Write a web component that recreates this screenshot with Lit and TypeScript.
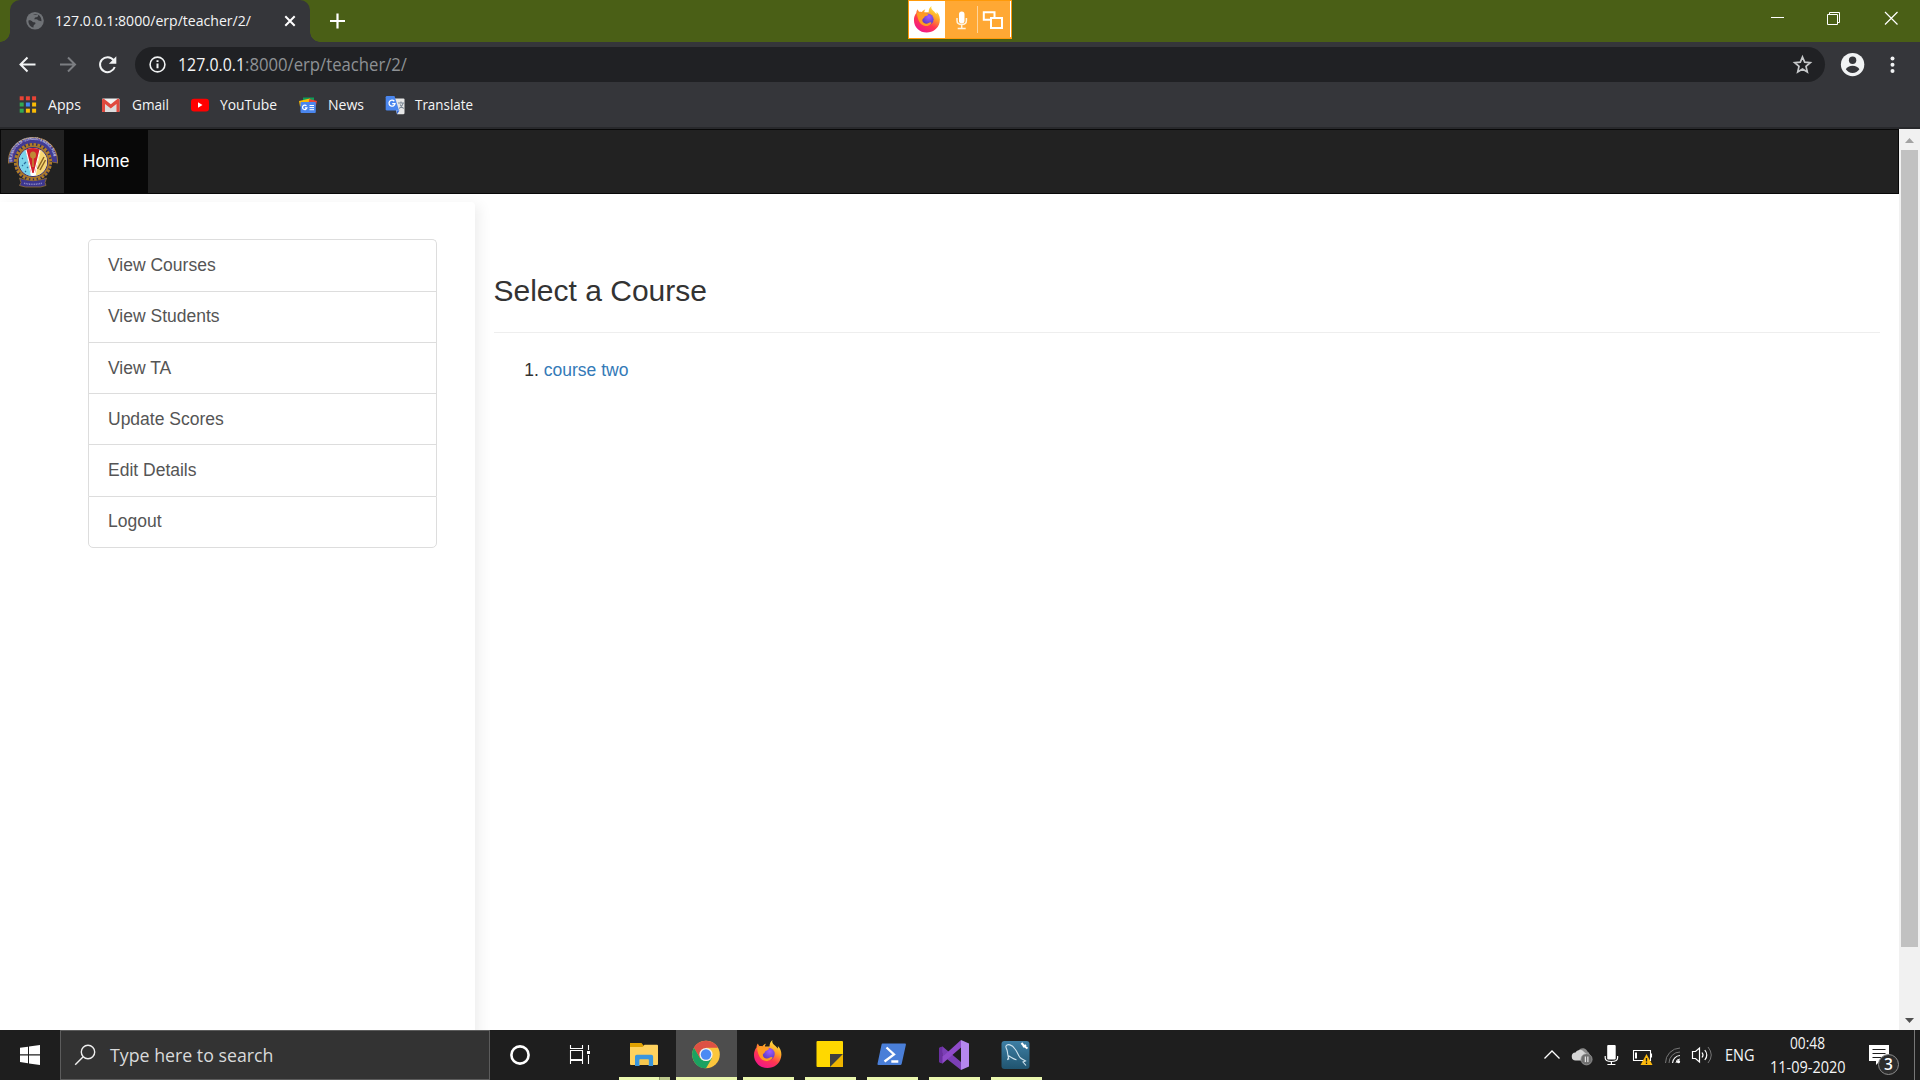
import { LitElement, html, svg, css, type TemplateResult } from "lit";
import { customElement } from "lit/decorators.js";

/* Single-line label in the system UI face, fitted to an exact width. */
const label = (text: string, width: number, size: number, cls = "") => html`
  <svg class="label ${cls}" width=${width} height=${Math.round(size * 1.4)}>
    <text x="0" y=${Math.round(size * 1.05)} font-size=${size} textLength=${width} lengthAdjust="spacingAndGlyphs">${text}</text>
  </svg>`;

/* Icon whose drawing coordinates start at (x, y). */
const icon = (x: number, y: number, w: number, h: number, body: TemplateResult | unknown) => html`
  <svg class="icon" width=${w} height=${h} viewBox="${x} ${y} ${w} ${h}">${body}</svg>`;

const firefox = (id: string) => svg`
  <defs>
    <linearGradient id="${id}a" x1=".85" y1="0" x2=".3" y2="1">
      <stop offset="0" stop-color="#fff44f"/><stop offset=".35" stop-color="#ffa726"/>
      <stop offset=".65" stop-color="#ff3750"/><stop offset="1" stop-color="#f0148c"/>
    </linearGradient>
    <radialGradient id="${id}b" cx=".6" cy=".3" r=".8">
      <stop offset="0" stop-color="#a05bff"/><stop offset="1" stop-color="#4b34b5"/>
    </radialGradient>
  </defs>
  <path fill="url(#${id}a)" d="M19 0c-1 3 1 4 3 6 1 1 1.500 1.500 2 2.500.5-.5.500-1.500.3-2.500C27.500 9 28.500 13 27.500 17.500 26 24 20.500 28 14 28 6.500 28 .5 22.500.5 15c0-3 .8-5.500 2.500-7.500 0-1.500.5-3 1.500-4 .2 1 .8 2 1.500 2.500 1 0 2 0 3 .3C9.500 5 11 4 12.500 3.700c-.8 1-1.200 2-1 2.800H16C16 3.500 17 1.500 19 0z"/>
  <circle cx="15" cy="14" r="6.200" fill="url(#${id}b)"/>
  <path fill="#ff9b22" d="M3.500 7.500C6 6 9 6.200 11 7.600l4.500.7c.3 1-1.500 2-3.500 2.600-.5 1.800-2.700 2.600-2.700 4.200 0 2 2 3.700 4.300 3.500 2-.2 3-1.600 4.600-1.500 1 .1.900.9.3 1.500-1.500 1.700-3.700 2.800-6 2.500-5-.7-8-5-9-13.600z"/>`;

const bookmarks: { text: string; width: number; gap: number; after: number; icon: unknown }[] = [
  {
    text: "Apps", width: 33, gap: 12, after: 20,
    icon: icon(19, 96, 17, 17, svg`
      ${["#ea4335", "#ea4335", "#ea4335", "#34a853", "#4285f4", "#fbbc05", "#34a853", "#fbbc05", "#fbbc05"].map(
        (c, i) => svg`<rect x=${19.7 + (i % 3) * 6.2} y=${96.3 + Math.floor(i / 3) * 6.2} width="4" height="4" fill=${c}/>`)}`),
  },
  {
    text: "Gmail", width: 37, gap: 11.5, after: 22.5,
    icon: icon(101, 96, 19, 17, svg`
      <rect x="102" y="98.500" width="17.500" height="13.500" rx="1" fill="#f2f2f2"/>
      <path d="M105 112v-8l6 4.500 6-4.500v8z" fill="#dcdcdc"/>
      <path d="M102 100v11.200q0 .8.800.8H105v-8l5.800 4.400 5.700-4.400v8h2.200q.8 0 .8-.8V100q0-1.500-1.500-1.500l-7.200 5.700-7.300-5.700q-1.500 0-1.500 1.500z" fill="#e04a3f"/>`),
  },
  {
    text: "YouTube", width: 57, gap: 11, after: 22,
    icon: icon(191, 96, 18, 17, svg`
      <rect x="191" y="98.700" width="18" height="12.800" rx="3" fill="#f00"/>
      <path d="M198 102.300v5.400l4.500-2.700z" fill="#fff"/>`),
  },
  {
    text: "News", width: 36, gap: 11, after: 21,
    icon: icon(299, 96, 18, 18, svg`
      <path d="M303 97.500h11v6h-11z" fill="#0f9d58"/>
      <path d="M299 101l11-2.500 1 5-11 3z" fill="#fbbc04"/>
      <path d="M309 99l8 2-1.500 6-7-1z" fill="#ea4335"/>
      <rect x="300.500" y="102" width="15.300" height="11" rx="1" fill="#4a86ee"/>
      <path d="M306.500 106a2.200 2.200 0 1 0 .4 1.900h-2" fill="none" stroke="#fff" stroke-width="1.200"/>
      <path d="M309.500 105.500h4.500m-4.500 2.100h4.500m-4.500 2.100h4.500" stroke="#fff"/>`),
  },
  {
    text: "Translate", width: 58, gap: 10, after: 0,
    icon: icon(385, 96, 20, 20, svg`
      <path d="M393 98.500h10.500q1 0 1 1V113q0 1.300-1.300 1.300H397z" fill="#e6e6e6"/>
      <path d="M398 103h6m-3-1.500v1.500m2.200 0q-.7 3.500-4 5.500m1-4q1 2.700 3.500 4" fill="none" stroke="#7b8794" stroke-width="1.100"/>
      <path d="M396.500 110.500h3l-2.500 3.800z" fill="#3367d6"/>
      <path d="M387 96h7.500l4.500 14.500h-12q-1.300 0-1.300-1.300V97.300q0-1.300 1.300-1.300z" fill="#4a86ee"/>
      <path d="M394.300 101.200a3 3 0 1 0 .7 2.500h-2.800" fill="none" stroke="#fff" stroke-width="1.300"/>`),
  },
];

const emblem = icon(8, 137, 50, 50, svg`
  <defs>
    <path id="arc" d="M12.200 161.500A20.900 19.700 0 1 1 53.800 161.500"/>
    <clipPath id="disc"><circle cx="33" cy="162" r="14"/></clipPath>
  </defs>
  <path d="M8 163.500v-3a25 23.500 0 0 1 50 0v3l-5.500-1-4-9h-31l-4 9z" fill="#94703a"/>
  <path d="M9 162.500v-2a24 22.500 0 0 1 48 0v2l-4.600-.8-3-8H17l-3 8z" fill="#413a92"/>
  <circle cx="33" cy="162" r="18.700" fill="#2f2b5c"/>
  <circle cx="33" cy="162" r="17.600" fill="none" stroke="#b07d28" stroke-width="3" stroke-dasharray="2.600 1.350"/>
  <circle cx="33" cy="162" r="16.600" fill="#a8772a"/>
  <circle cx="33" cy="162" r="14.900" fill="#35307c"/>
  <g clip-path="url(#disc)">
    <path d="M19 148h28v28H19z" fill="#fff"/>
    <path d="M19 148h6.500l5.500 29H19z" fill="#7ad4ea"/>
    <path d="M40.500 148H48v29H35.500z" fill="#f7d774"/>
    <path d="M25 147h16l-6 26h-4z" fill="#d3202b"/>
    <path d="M26 150l6.500 26h1L40 150" fill="none" stroke="#fff" stroke-width="1.100"/>
    <path d="M22 158l1 1m2 3l1 1m-4 2l1 1m4 1l1 1m-3 3l1 1m-4-14l1 1m1 4l1 1" stroke="#276a9b" stroke-width="1.200"/>
    <path d="M37.500 169l6.500-12m-4 13l5.500-10" stroke="#8a6424" stroke-width="1.500"/>
    <path d="M40 152l-3 13" stroke="#fff3bc"/>
  </g>
  <ellipse cx="33" cy="155" rx="3" ry="3.600" fill="#c08a35"/>
  <path d="M33 158v9" stroke="#c08a35" stroke-width="1.600"/>
  <path d="M19.500 178l4 1.500q9.500 2.500 19 0l4-1.500-1.500 4.500 1 3-5.500 1.500H25.500L19.500 185.500l1.500-3z" fill="#3b358f" stroke="#94703a" stroke-width=".8"/>
  <text font-size="4.200" font-weight="700" fill="#dedcf0" font-family="Liberation Sans, sans-serif"><textPath href="#arc" textLength="62" lengthAdjust="spacingAndGlyphs">BIRLA INSTITUTE OF TECHNOLOGY &amp; SCIENCE, PILANI</textPath></text>
  <path d="M24 183.200q9 2.200 18 0" fill="none" stroke="#8d88c4" stroke-width="1.600" stroke-dasharray="1 .7"/>`);

const pinned: { name: string; art: unknown }[] = [
  {
    name: "files",
    art: icon(630, 1040, 28, 28, svg`
      <path d="M630 1043h11.500l2 2.500v4H630z" fill="#e0a100"/>
      <path d="M630 1047h12.500l2-2.200H657q1 0 1 1V1064q0 1-1 1h-26q-1 0-1-1z" fill="#ffd25e"/>
      <path d="M635 1066v-9.500q0-1.800 1.800-1.800h14.500q1.800 0 1.800 1.800v9.500h-4.500v-6.500h-9v6.500z" fill="#3a96dd"/>
      <path d="M639.600 1059.500h9v5.500h-9z" fill="#f5c64e"/>`),
  },
  {
    name: "chrome",
    art: icon(693, 1040.5, 28, 28, svg`
      <circle cx="706" cy="1055" r="13.800" fill="#fbc63c"/>
      <path d="M694 1048.100A13.800 13.800 0 0 1 718 1048.300H706l-6 10.200z" fill="#dd5144"/>
      <path d="M694 1048.100A13.800 13.800 0 0 0 706 1068.800l6-10.300-6 3-6-3z" fill="#1ba261"/>
      <path d="M694 1048.100l6 10.400 6-10.200h12" fill="#dd5144"/>
      <circle cx="706" cy="1055" r="6.600" fill="#f1f1f1"/>
      <circle cx="706" cy="1055" r="5.200" fill="#4a8af4"/>`),
  },
  { name: "firefox", art: icon(0.5, 0, 28, 28, firefox("t")) },
  {
    name: "notes",
    art: icon(816, 1041, 28, 28, svg`
      <rect x="816.500" y="1042" width="26.500" height="26" rx="1" fill="#ffd800"/>
      <path d="M830 1068l13-13v12q0 1-1 1z" fill="#eeb400"/>
      <path d="M830 1055h13l-13 13z" fill="#3f3f3f"/>`),
  },
  {
    name: "powershell",
    art: icon(878, 1040.5, 28, 28, svg`
      <path d="M882.500 1044H905q1.200 0 .9 1.200l-4.200 19q-.3 1.200-1.500 1.200H878.500q-1.300 0-1-1.200l4-19q.2-1.200 1-1.200z" fill="#4a7fd8"/>
      <path d="M886.500 1048l7.500 6.800-9.500 7.200m6.800 0h7" fill="none" stroke="#fff" stroke-width="2.300"/>`),
  },
  {
    name: "studio",
    art: icon(939, 1040, 30, 30, svg`
      <path d="M939 1048l3.500-1.500L961 1062v8l-18.500-14.500v-3L939 1056z" fill="#7b3fb5"/>
      <path d="M939 1048v14l3.500 1.500 18.500-16V1040l-16.500 15-2 1.200v-7z" fill="#8f4bc9"/>
      <path d="M939 1048l3.500-1.500v17L939 1062z" fill="#6a2fa0"/>
      <path d="M961 1040l8 3.500v23l-8 3.500z" fill="#b587ee"/>`),
  },
  {
    name: "workbench",
    art: icon(1002, 1040, 29, 29, svg`
      <defs><linearGradient id="wb" x2="0" y2="1"><stop stop-color="#3e7fa5"/><stop offset="1" stop-color="#20546f"/></linearGradient></defs>
      <rect x="1001.500" y="1041" width="28" height="28" rx="3" fill="url(#wb)"/>
      <path d="M1006 1046c1.500-2.500 6-1.500 9 3 2.500 3 3 6 5 8.500 2 2 4 2.500 5.500 3.500l-2.500 1 3 3.500m-18.500-5.500l1.500-4c3 2 5.500 3.500 7.500 3.800M1007 1050c1 3.500.5 6 2 9.500M1006 1046c-.5 1.500.5 2.500 1 4" fill="none" stroke="#cfe3ee" stroke-width="1.100"/>
      <path d="M1021.500 1043l2.500 3m0 0l3.500 2.500m-4.500-1.500l3-2" stroke="#fff" stroke-width="2"/>`),
  },
];

@customElement("app-root")
export class AppRoot extends LitElement {
  static styles = css`
    :host { display: flex; flex-direction: column; width: 1920px; height: 1080px; overflow: hidden; position: relative;
      background: #fff; font-family: "Liberation Sans", Arial, sans-serif; }
    * { box-sizing: border-box; }
    svg { display: block; flex: none; overflow: visible; }
    .label { font-family: "Open Sans", "Noto Sans", sans-serif; fill: #f4f5f6; }
    .label.dim { fill: #8e9195; }
    .label.pale { fill: #d9dadb; }

    .strip { display: flex; height: 42px; padding-left: 10px; background: #4a5f16; flex: none; }
    .tab { position: relative; display: flex; align-items: flex-start; width: 300px; height: 42px; background: #35363a;
      border-radius: 10px 10px 0 0; padding: 11px 0 0 16px; }
    .tab::before, .tab::after { content: ""; position: absolute; bottom: 0; width: 10px; height: 10px; }
    .tab::before { left: -10px; background: radial-gradient(circle at 0 0, transparent 9.500px, #35363a 10px); }
    .tab::after { right: -10px; background: radial-gradient(circle at 100% 0, transparent 9.500px, #35363a 10px); }
    .tab .label { margin: -1px 33px 0 11px; }
    .plus { margin: 11px 0 0 19px; }
    .controls { display: flex; margin-left: auto; }
    .float { position: absolute; left: 908px; top: 0; width: 104px; height: 39px; background: #ffa834;
      border: 1px solid #ff9a0a; display: flex; }
    .float .fx { background: #fff; width: 36px; height: 37px; padding: 5px 0 0 4px; }

    .tools { display: flex; height: 43px; background: #35363a; flex: none; align-items: flex-start; }
    .omni { display: flex; align-items: flex-start; width: 1690px; height: 35px; margin-top: 5px; border-radius: 18px; background: #202124; }
    .omni .label { margin-top: 6px; }
    .omni .host { margin-left: 12px; }
    .omni .star { margin-left: auto; }
    .marks { display: flex; height: 42px; background: #35363a; flex: none; padding: 11px 0 0 19px; align-items: flex-start; }
    .mark { display: flex; }
    .mark .label { margin-top: -2px; }
    .edge { height: 2px; background: #28292c; flex: none; }

    .view { display: flex; height: 901px; flex: none; }
    .page { width: 1899px; display: flex; flex-direction: column; overflow: hidden; }
    .nav { display: flex; height: 65px; flex: none; background: #222; border: 1px solid #080808; }
    .brand { width: 63px; padding: 7px 0 0 7px; }
    .home { width: 84px; background: #080808; color: #fff; font-size: 17.5px; line-height: 25px; padding: 19px 0 0 18.75px; }
    .body { display: flex; flex: 1; padding-top: 8px; }
    .side { width: 475px; height: 900px; flex: none; padding: 37.4px 0 0 88px; border-radius: 0 4px 0 0;
      box-shadow: 4px 3px 14px rgba(0, 0, 0, .075); }
    .menu { width: 349px; display: flex; flex-direction: column; }
    .row { height: 51.25px; flex: none; border: 1px solid #ddd; border-bottom: 0; padding: 12.65px 19px 0; font-size: 17.5px;
      line-height: 25px; color: #555; }
    .row:first-child { border-radius: 5px 5px 0 0; }
    .row:last-child { border-bottom: 1px solid #ddd; border-radius: 0 0 5px 5px; height: 52.25px; }
    .main { flex: 1; padding: 72px 19px 0 19px; color: #333; }
    .title { margin: 0 0 0 -.5px; font-weight: 400; font-size: 30px; line-height: 33px; }
    .rule { height: 1px; background: #eee; margin: 25px 0 25px; }
    .courses { margin: 0; padding-left: 49.75px; font-size: 17.5px; line-height: 25px; }
    .link { color: #337ab7; }

    .scroll { width: 21px; height: 901px; background: #f1f1f1; display: flex; flex-direction: column; align-items: center; }
    .thumb { width: 17px; height: 797px; background: #c1c1c1; }
    .down { margin-top: auto; }

    .bar { display: flex; height: 50px; flex: none; background: #1e1e1e; }
    .search { display: flex; width: 430px; height: 50px; background: #333; border: 1px solid #5c5c5c; }
    .search .label { margin: 12px 0 0 0; }
    .apps { display: flex; margin-left: 3px; }
    .app { width: 62px; height: 50px; display: flex; flex-direction: column; align-items: center; justify-content: space-between;
      padding-top: 10px; }
    .app::after { content: ""; width: 51px; height: 3px; background: #eaf7ae; margin-left: 1px; }
    .app.files::after { background: linear-gradient(90deg, #eaf7ae 40px, #8e9a68 40px, #8e9a68 41px, #bcc88c 41px); }
    .app.chrome { background: #4d4d4d; width: 61px; margin-left: 1px; }
    .app.chrome::after { width: 61px; margin: 0; }
    .tray { display: flex; margin-left: auto; }
    .lang { width: 44px; padding: 15px 0 0 7px; }
    .clock { width: 93px; display: flex; flex-direction: column; align-items: center; padding: 3px 1.500px 0 0; gap: 2px; }
    .peek { width: 6px; border-left: 1px solid #777; }
  `;

  render() {
    return html`
      <div class="strip">
        <div class="tab">
          ${icon(26, 11, 18, 19, svg`
            <circle cx="35" cy="20.800" r="8.800" fill="#6f7276"/>
            <path d="M28.500 20.500c1.500-.5 3 .2 4 1.200 1 .8 3 .3 3 1.500 0 1.500-2 1.200-2 2.800v1.500c-3-.5-5.500-3.500-5-7zM33 15c1-1 4-1.200 5.500-.2l-1 2.200-2.500.5-.8 1.800c1.800.2 3.300-.3 4.300 1.200l3 .8c0-3-1-5-3-6.500" fill="#35363a"/>`)}
          ${label("127.0.0.1:8000/erp/teacher/2/", 196, 15)}
          ${icon(284, 11, 12, 19, svg`<path d="M285.300 16.300l9.400 9.400m0-9.400l-9.400 9.400" stroke="#fff" stroke-width="2"/>`)}
        </div>
        <div class="plus">${icon(329, 11, 18, 19, svg`<path d="M330 21h15m-7.500-7.500v15" stroke="#fff" stroke-width="2.200"/>`)}</div>
        <div class="controls">
          ${icon(1749, 0, 57, 42, svg`<path d="M1771 17.500h13" stroke="#fff"/>`)}
          ${icon(1806, 0, 57, 42, svg`<path d="M1827.500 14.500h10v10h-10zM1829.500 14.500v-2h10v10h-2" fill="none" stroke="#fff"/>`)}
          ${icon(1863, 0, 57, 42, svg`<path d="M1885 12l12.500 12.500m0-12.500l-12.500 12.500" stroke="#fff" stroke-width="1.200"/>`)}
        </div>
      </div>
      <div class="float">
        <div class="fx">${html`<svg class="icon" width="28" height="28" viewBox="-.5 0 29.500 29.500">${firefox("p")}</svg>`}</div>
        ${icon(945, 1, 66, 37, svg`
          <rect x="959" y="11.500" width="5.500" height="12" rx="2.700" fill="#fff"/>
          <path d="M957 18v2.500q0 4 4.700 4t4.700-4V18M961.700 24.500v4m-4 0h8" fill="none" stroke="#fff3df" stroke-width="1.500"/>
          <path d="M977.500 6v27" stroke="#ffd49a"/>
          <path d="M990 19.800h-6.200v-7.600h10.700V17M991 18h11v10h-11z" fill="none" stroke="#fff" stroke-width="2"/>
          <path d="M1010.500 1v36" stroke="#fff"/>`)}
      </div>
      <div class="tools">
        ${icon(0, 42, 135, 43, svg`
          <path d="M35.500 64.500H20.500m7-7l-7 7 7 7" fill="none" stroke="#f1f3f4" stroke-width="2"/>
          <path d="M60 64.500H75m-7-7l7 7-7 7" fill="none" stroke="#7c7e82" stroke-width="2"/>
          <path d="M113.600 60.200A7.500 7.500 0 1 0 114.700 67" fill="none" stroke="#f1f3f4" stroke-width="2"/>
          <path d="M116.300 56.300v7.400h-7.400z" fill="#f1f3f4"/>`)}
        <div class="omni">
          ${icon(135, 47, 31, 35, svg`
            <circle cx="157.500" cy="64.500" r="7.400" fill="none" stroke="#f1f3f4" stroke-width="1.600"/>
            <path d="M157.500 63.500v4.700m0-8v1.900" stroke="#f1f3f4" stroke-width="2"/>`)}
          <div class="host">${label("127.0.0.1", 67, 17.4)}</div>
          ${label(":8000/erp/teacher/2/", 162, 17.4, "dim")}
          <div class="star">${icon(1785, 47, 40, 35, svg`
            <path d="M1802.500 57l2.200 5.200 5.600.5-4.300 3.700 1.300 5.500-4.800-2.900-4.800 2.900 1.300-5.500-4.300-3.700 5.600-.5z" fill="none" stroke="#c6c8ca" stroke-width="1.700"/>`)}</div>
        </div>
        ${icon(1825, 42, 95, 43, svg`
          <circle cx="1852.600" cy="64.600" r="11.700" fill="#f1f3f4"/>
          <circle cx="1852.600" cy="60.200" r="3.700" fill="#35363a"/>
          <path d="M1845.800 69.300q2-3.500 6.800-3.500t6.800 3.500q-2.500 3.600-6.800 3.600t-6.800-3.600z" fill="#35363a"/>
          <circle cx="1892.500" cy="58.500" r="2" fill="#f1f3f4"/><circle cx="1892.500" cy="64.800" r="2" fill="#f1f3f4"/><circle cx="1892.500" cy="71" r="2" fill="#f1f3f4"/>`)}
      </div>
      <div class="marks">
        ${bookmarks.map((b) => html`<div class="mark" style="gap:${b.gap}px;margin-right:${b.after}px">${b.icon}${label(b.text, b.width, 15)}</div>`)}
      </div>
      <div class="edge"></div>
      <div class="view">
        <div class="page">
          <div class="nav">
            <div class="brand">${emblem}</div>
            <div class="home">Home</div>
          </div>
          <div class="body">
            <div class="side">
              <div class="menu">
                ${["View Courses", "View Students", "View TA", "Update Scores", "Edit Details", "Logout"].map((t) => html`<div class="row">${t}</div>`)}
              </div>
            </div>
            <div class="main">
              <h3 class="title">Select a Course</h3>
              <div class="rule"></div>
              <ol class="courses"><li><a class="link">course two</a></li></ol>
            </div>
          </div>
        </div>
        <div class="scroll">
          ${icon(1899, 129, 21, 21, svg`<path d="M1905 143l4.500-5 4.500 5z" fill="#a3a3a3"/>`)}
          <div class="thumb"></div>
          <div class="down">${icon(1899, 1009, 21, 21, svg`<path d="M1905 1018l4.500 5 4.500-5z" fill="#505050"/>`)}</div>
        </div>
      </div>
      <div class="bar">
        ${icon(0, 1030, 60, 50, svg`<path d="M20 1047.800l8-1.100v7.500h-8zM29 1046.500l11-1.600v9.300H29zM20 1055.400h8v7.800l-8-1.100zM29 1055.400h11v9.700l-11-1.600z" fill="#fff"/>`)}
        <div class="search">
          ${icon(61, 1031, 49, 48, svg`
            <circle cx="88" cy="1052" r="6.700" fill="none" stroke="#f0f0f0" stroke-width="1.400"/>
            <path d="M83.200 1056.800l-8 8" stroke="#f0f0f0" stroke-width="1.400"/>`)}
          ${label("Type here to search", 163.5, 18.5, "pale")}
        </div>
        ${icon(490, 1030, 60, 50, svg`<circle cx="520" cy="1055" r="8.600" fill="none" stroke="#fff" stroke-width="2.600"/>`)}
        ${icon(550, 1030, 60, 50, svg`
          <path d="M570.500 1045v3.500h12v-3.500M570.500 1050.500h12v9h-12zM570.500 1064v-3.500h12v3.500M588.500 1045v5m0 5v9" fill="none" stroke="#fff" stroke-width="1.100"/>
          <rect x="587" y="1051" width="3" height="3" fill="#fff"/>`)}
        <div class="apps">${pinned.map((p) => html`<div class="app ${p.name}">${p.art}</div>`)}</div>
        <div class="tray">
          ${icon(1536, 1030, 32, 50, svg`<path d="M1544.500 1058.500l7.500-7.500 7.500 7.500" fill="none" stroke="#fff" stroke-width="1.300"/>`)}
          ${icon(1568, 1030, 30, 50, svg`
            <path d="M1579 1050a5 5 0 0 1 8.500 1.500q3 1.500 1.500 5.500l-6 1z" fill="#8a8a8a"/>
            <path d="M1576 1060.500a4 4 0 0 1-.5-8 5 5 0 0 1 8.500-.5q2.500 1 4 3.500l-2 5z" fill="#d6d6d6"/>
            <circle cx="1586.500" cy="1059.300" r="5.600" fill="#6e6e6e" stroke="#a5a5a5" stroke-width=".7"/>
            <path d="M1585.300 1056.500v5.600m2.600-5.600v5.600" stroke="#fff"/>`)}
          ${icon(1598, 1030, 28, 50, svg`
            <rect x="1607.200" y="1045" width="8.500" height="14.500" rx="1" fill="#fff"/>
            <path d="M1605.200 1056v2q0 3.500 6.200 3.500t6.200-3.500v-2M1611.400 1061v3.500m-4 0h8" fill="none" stroke="#fff" stroke-width="1.200"/>`)}
          ${icon(1626, 1030, 32, 50, svg`
            <path d="M1633.500 1050.500h17v10h-17zM1651.500 1053.500v4" fill="none" stroke="#fff" stroke-width="1.100"/>
            <path d="M1636 1052.500v6" stroke="#fff" stroke-width="2"/>
            <path d="M1646.500 1054l6 11h-12z" fill="#fcb90d"/>
            <path d="M1646.500 1058v3.500m0 1v1.500" stroke="#1e1e1e" stroke-width="1.300"/>`)}
          ${icon(1658, 1030, 28, 50, svg`
            <path d="M1665.500 1063a15 15 0 0 1 14.500-15" fill="none" stroke="#777"/>
            <path d="M1669 1063a11 11 0 0 1 11-11" fill="none" stroke="#777"/>
            <path d="M1672.500 1063a8 8 0 0 1 7.500-7.500" fill="none" stroke="#eee" stroke-width="1.200"/>
            <path d="M1676 1063a4 4 0 0 1 4-4" fill="none" stroke="#eee"/>
            <circle cx="1678.500" cy="1061.700" r="1.600" fill="#fff"/>`)}
          ${icon(1686, 1030, 32, 50, svg`
            <path d="M1692.500 1051.500h3l4-3.500v14l-4-3.500h-3z" fill="none" stroke="#fff" stroke-width="1.200"/>
            <path d="M1702 1052.500q2 2.500 0 5M1704.800 1050q4 5 0 10" fill="none" stroke="#fff" stroke-width="1.200"/>
            <path d="M1708 1047q6.500 8 0 16" fill="none" stroke="#777"/>`)}
          <div class="lang">${label("ENG", 29.5, 15.4)}</div>
          <div class="clock">${label("00:48", 35, 15.4)}${label("11-09-2020", 75.5, 15.4)}</div>
          ${icon(1855, 1030, 59, 50, svg`
            <path d="M1869 1045h20v16h-9l-4 4v-4h-7z" fill="#fff"/>
            <path d="M1872.500 1049.500h13m-13 4h13m-13 4h9" stroke="#1e1e1e" stroke-width="1.200"/>
            <circle cx="1888.500" cy="1064.500" r="10" fill="#2d2d2d" stroke="#8d8d8d"/>
            <text x="1888.500" y="1070" text-anchor="middle" font-family="Open Sans, sans-serif" font-weight="600" font-size="15.500" fill="#fff">3</text>`)}
          <div class="peek"></div>
        </div>
      </div>
    `;
  }
}
